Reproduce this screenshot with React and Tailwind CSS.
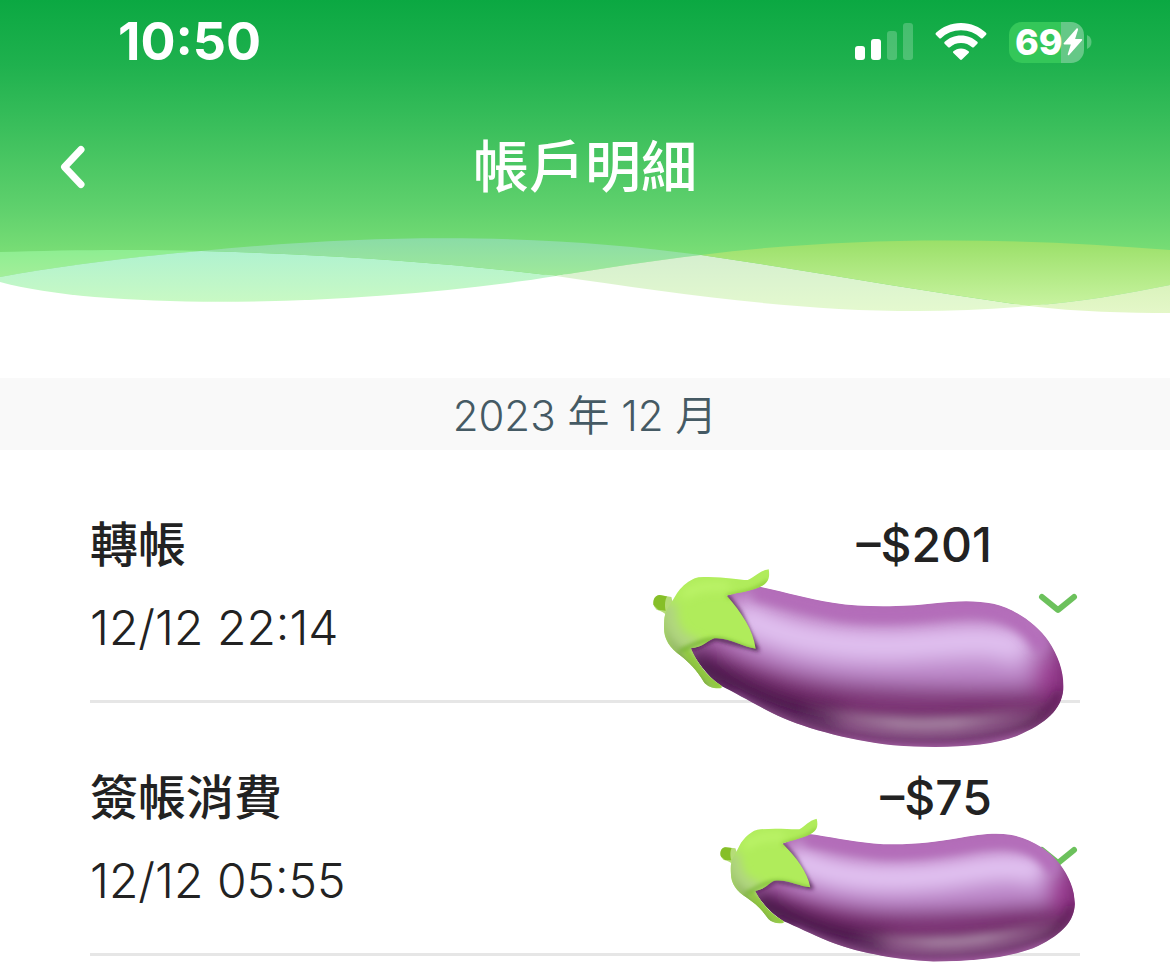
import React from "react";

const transactions = [
  {
    id: "t1",
    title: "轉帳",
    time: "12/12 22:14",
    amount: "–$201",
    sticker: "right-[16px] top-[119px] h-[179px] w-[411px]",
  },
  {
    id: "t2",
    title: "簽帳消費",
    time: "12/12 05:55",
    amount: "–$75",
    sticker: "right-[6px] top-[110px] h-[153px] w-[351px] -rotate-4",
  },
];

function Signal() {
  return (
    <svg width="58" height="38" viewBox="0 0 58 38" fill="#fff" aria-hidden="true">
      <rect x="0" y="23" width="10" height="14" rx="3" />
      <rect x="16" y="16" width="10" height="21" rx="3" />
      <rect x="32" y="8" width="10" height="29" rx="3" opacity="0.22" />
      <rect x="48" y="0" width="10" height="37" rx="3" opacity="0.22" />
    </svg>
  );
}

function Wifi() {
  return (
    <svg width="52" height="38" viewBox="0 0 52 38" fill="#fff" aria-hidden="true">
      <path d="M26 0C36 0 44.500 3.800 51 9.800c.6.600.6 1.300.1 1.900l-3.400 3.500c-.5.500-1.200.5-1.700 0C40.600 10.300 33.800 7.300 26 7.300S11.400 10.300 6 15.200c-.5.500-1.200.5-1.700 0L.9 11.700c-.5-.6-.5-1.300.1-1.900C7.500 3.800 16 0 26 0Z" />
      <path d="M26 12.500c6.500 0 12 2.400 16.300 6.300.6.500.6 1.300 0 1.900l-3.500 3.500c-.5.500-1.100.5-1.700 0-3-2.700-6.700-4.200-11.100-4.200s-8.100 1.500-11.100 4.200c-.6.500-1.200.5-1.700 0l-3.500-3.500c-.6-.6-.6-1.400 0-1.900C14 14.900 19.500 12.500 26 12.500Z" />
      <path d="M26 25.500c3 0 5.600 1.100 7.600 2.800.6.500.6 1.200 0 1.800l-6.700 6.500c-.5.500-1.300.5-1.800 0l-6.700-6.500c-.6-.6-.6-1.300 0-1.800 2-1.700 4.600-2.800 7.600-2.800Z" />
    </svg>
  );
}

function Battery() {
  return (
    <div className="flex items-center gap-[3px]">
      <div className="flex h-[41px] w-[75px] items-center rounded-[13px] bg-[linear-gradient(to_right,#34c759_69%,#65c887_69%)] pl-[6px]">
        <span className="font-['Inter',sans-serif] text-[36px] leading-[41px] font-extrabold text-white">
          69
        </span>
        <svg width="20" height="28" viewBox="0 0 20 28" className="shrink-0" aria-hidden="true">
          <path
            d="M13.300.8.9 15c-.7.800-.3 1.600.6 1.600h6.300L4.800 26c-.4 1.300.7 1.800 1.500.8L18.900 12.600c.6-.8.300-1.500-.6-1.500h-6.200L15 1.700C15.300.4 14.200-.2 13.300.8Z"
            fill="#fff"
          />
        </svg>
      </div>
      <svg width="5" height="14" viewBox="0 0 5 14" aria-hidden="true">
        <path d="M0 0C3 1.200 4.500 4 4.500 7S3 12.800 0 14Z" fill="#58c67c" />
      </svg>
    </div>
  );
}

function Waves() {
  const stops = [
    ["w1", "#8eee92", "#a3ee99", 250, 277],
    ["w2", "#b0f2d0", "#c8f9c4", 251, 301],
    ["w3", "#8bdca6", "#9fe99a", 239, 276],
    ["w4", "#d5efcf", "#e4f9cf", 255, 310],
    ["w5", "#9be069", "#c8f3a0", 241, 306],
    ["w6", "#daf3bd", "#e4f7c8", 285, 313],
  ];
  return (
    <svg
      className="block h-[90px] w-full"
      viewBox="0 230 1170 90"
      preserveAspectRatio="none"
      aria-hidden="true"
    >
      <defs>
        {stops.map(([id, from, to, y1, y2]) => (
          <linearGradient key={id} id={id} gradientUnits="userSpaceOnUse" x1="0" x2="0" y1={y1} y2={y2}>
            <stop offset="0" stopColor={from} />
            <stop offset="1" stopColor={to} />
          </linearGradient>
        ))}
      </defs>
      <path
        fill="#fff"
        d="M0 279C110 309 370 303 556 273C700 294 860 319 1029 303C1080 309 1125 310 1170 310V321H0Z"
      />
      <path fill="url(#w1)" d="M0 252C60 250 140 249 201 251C130 257 60 266 0 277Z" />
      <path
        fill="url(#w2)"
        d="M0 277C60 266 130 257 201 251C320 254 440 262 556 276C370 306 110 312 0 282Z"
      />
      <path
        fill="url(#w3)"
        d="M201 251C400 231 560 236 701 255C650 261 605 268 556 276C440 262 320 254 201 251Z"
      />
      <path
        fill="url(#w4)"
        d="M556 276C605 268 650 261 701 255C810 271 920 291 1029 306C860 322 700 297 556 276Z"
      />
      <path
        fill="url(#w5)"
        d="M701 255C850 236 1010 237 1170 250V285C1125 294 1080 302 1029 306C920 291 810 271 701 255Z"
      />
      <path fill="url(#w6)" d="M1029 306C1080 302 1125 294 1170 285V313C1125 313 1080 312 1029 306Z" />
    </svg>
  );
}

function Eggplant({ id, className }) {
  const body =
    "M350 230C430 245 500 268 580 280C680 296 800 291 870 283C950 273 1010 272 1060 283C1130 300 1190 345 1225 395C1255 440 1272 490 1269 540C1262 600 1220 640 1130 678C1040 712 900 716 760 706C620 690 480 650 400 610C340 580 290 550 245 528C200 495 170 450 150 412L210 370L262 258Z";
  const calyx =
    "M178 204C240 199 295 212 325 212C348 203 358 185 388 180C392 205 387 217 370 228C340 245 300 248 262 258C308 310 342 362 349 417C310 412 270 382 225 386C202 394 195 412 155 416C172 455 200 500 247 528L247 535C225 538 205 530 195 518C172 478 150 458 125 438C90 415 73 385 75 350C75 325 78 305 90 290C105 268 115 245 128 234C145 217 165 206 178 204Z";
  return (
    <svg
      className={className}
      viewBox="42 179 1229 535"
      preserveAspectRatio="none"
      role="img"
      aria-label="茄子"
    >
      <defs>
        <clipPath id={id + "-body"}>
          <path d={body} />
        </clipPath>
        <clipPath id={id + "-calyx"}>
          <path d={calyx} />
        </clipPath>
        <linearGradient id={id + "-shine"} gradientUnits="userSpaceOnUse" x1="480" x2="1200" y1="0" y2="0">
          <stop offset="0" stopColor="#a07a9c" stopOpacity="0" />
          <stop offset="0.4" stopColor="#a07a9c" />
          <stop offset="0.65" stopColor="#a07a9c" />
          <stop offset="1" stopColor="#a07a9c" stopOpacity="0" />
        </linearGradient>
        <filter id={id + "-b1"} filterUnits="userSpaceOnUse" x="-100" y="0" width="1600" height="900">
          <feGaussianBlur stdDeviation="32" />
        </filter>
        <filter id={id + "-b2"} filterUnits="userSpaceOnUse" x="-100" y="0" width="1600" height="900">
          <feGaussianBlur stdDeviation="14" />
        </filter>
        <filter id={id + "-b3"} filterUnits="userSpaceOnUse" x="-100" y="0" width="1600" height="900">
          <feGaussianBlur stdDeviation="7" />
        </filter>
      </defs>
      <g clipPath={"url(#" + id + "-body)"} fill="none">
        <path d={body} fill="#ae69b2" />
        <g filter={"url(#" + id + "-b1)"}>
          <path d="M320 340C430 420 600 460 760 465C900 465 1030 465 1190 460" stroke="#bd88ca" strokeWidth="130" />
          <path d="M280 300C410 375 560 405 760 403C900 400 1000 378 1080 395C1120 402 1145 415 1160 425" stroke="#e2c3f2" strokeWidth="100" />
          <path d="M150 440C300 500 440 540 650 560C850 575 1050 575 1240 575" stroke="#7a2d72" strokeWidth="80" />
          <path d="M130 450C290 545 450 600 650 635C850 660 1080 650 1280 610" stroke="#6b3164" strokeWidth="64" />
          <path d="M150 440C300 550 440 600 600 630" stroke="#38103a" strokeWidth="70" />
          <path d="M1275 330C1310 420 1310 500 1280 620" stroke="#7a2a72" strokeWidth="100" />
          <ellipse cx="1212" cy="495" rx="30" ry="55" fill="#9c3390" />
        </g>
        <g filter={"url(#" + id + "-b2)"}>
          <path d="M345 248C440 262 520 290 610 308C720 322 830 312 900 305C980 296 1040 296 1090 316C1140 334 1180 370 1210 420" stroke="#b46dba" strokeWidth="46" />
          <path d="M480 590C700 655 950 665 1200 600" stroke={"url(#" + id + "-shine)"} strokeWidth="44" />
          <path d="M340 585C440 635 560 668 720 688C880 701 1040 694 1140 655C1190 630 1235 600 1258 545" stroke="#551f50" strokeWidth="16" />
          <path d="M280 560C420 650 560 702 740 718C900 728 1050 722 1160 680" stroke="#a962a6" strokeWidth="20" />
        </g>
        <path
          d="M262 258L300 308L352 418L230 386L155 418"
          stroke="#40163f"
          strokeWidth="10"
          filter={"url(#" + id + "-b3)"}
        />
      </g>
      <path d="M45 290C40 270 48 258 62 257L97 263L104 292L80 314C68 305 58 303 52 300Z" fill="#b5dc78" />
      <path d="M43 286C42 268 50 258 62 257L84 261C78 270 76 288 80 304L58 301Z" fill="#86bf28" />
      <path d={calyx} fill="#b0ec5b" />
      <g clipPath={"url(#" + id + "-calyx)"} fill="none">
        <g filter={"url(#" + id + "-b2)"}>
          <path d="M76 290C70 370 100 430 170 470L230 545" stroke="#8cae62" strokeWidth="30" />
          <path d="M92 280C85 360 120 400 180 412" stroke="#b0d67f" strokeWidth="44" />
          <path d="M130 260C170 225 220 230 270 232" stroke="#bdf56b" strokeWidth="24" />
        </g>
        <g filter={"url(#" + id + "-b3)"}>
          <path d="M120 425C150 412 200 385 228 390C270 390 300 412 350 424" stroke="#79b634" strokeWidth="12" />
          <path d="M262 262C310 250 350 246 388 215" stroke="#8ccc38" strokeWidth="12" />
          <path d="M140 425C170 470 200 505 245 534" stroke="#8fc83a" strokeWidth="18" />
          <path d="M110 435C150 465 175 500 205 535" stroke="#6b9a2c" strokeWidth="10" />
        </g>
      </g>
    </svg>
  );
}

function Transaction({ item }) {
  return (
    <li className="relative flex border-b-[3px] border-[#e6e6e6] pt-[53px] pb-[31px] text-[#222]">
      <div className="flex-1 text-[48px] leading-[83px]">
        <h2 className="font-medium">{item.title}</h2>
        <p className="font-[350]">{item.time}</p>
      </div>
      <p className="text-[48px] leading-[83px] font-medium">{item.amount}</p>
      <button type="button" aria-label="展開明細" className="mt-9 flex w-[88px] items-center justify-end">
        <svg width="44" height="24" viewBox="0 0 44 24" fill="none" aria-hidden="true">
          <path d="M6 5L22 18L38 5" stroke="#6cc15c" strokeWidth="6" strokeLinecap="round" strokeLinejoin="round" />
        </svg>
      </button>
      <Eggplant id={item.id} className={"pointer-events-none absolute " + item.sticker} />
    </li>
  );
}

export default function App() {
  return (
    <div className="min-h-screen bg-white font-['Inter','Noto_Sans_CJK_TC',sans-serif]">
      <header className="bg-[linear-gradient(to_bottom,#0ba842_0px,#1fb14e_65px,#37bd5a_120px,#60d16d_210px,#7ade76_255px)] text-white">
        <div className="flex h-[84px] items-center justify-between pr-[78px] pl-[118px]">
          <time className="text-[52px] leading-[60px] font-bold">10:50</time>
          <div className="flex items-center gap-[22px]">
            <Signal />
            <Wifi />
            <Battery />
          </div>
        </div>
        <nav className="grid h-[146px] grid-cols-[120px_1fr_120px] items-center pt-5">
          <button type="button" aria-label="返回" className="flex h-16 items-center pl-[56px]">
            <svg width="32" height="48" viewBox="0 0 32 48" fill="none" aria-hidden="true">
              <path d="M25 6.500L8.500 24L25 41.500" stroke="#fff" strokeWidth="7" strokeLinecap="round" strokeLinejoin="round" />
            </svg>
          </button>
          <h1 className="text-center text-[56px] leading-[64px] font-medium">帳戶明細</h1>
        </nav>
        <Waves />
      </header>
      <main>
        <h2 className="mt-[58px] h-[72px] bg-[#f9f9f9] text-center text-[42px] leading-[76px] font-[350] text-[#455a64]">
          2023 年 12 月
        </h2>
        <ul className="mx-[90px]">
          {transactions.map((item) => (
            <Transaction key={item.id} item={item} />
          ))}
        </ul>
      </main>
    </div>
  );
}
